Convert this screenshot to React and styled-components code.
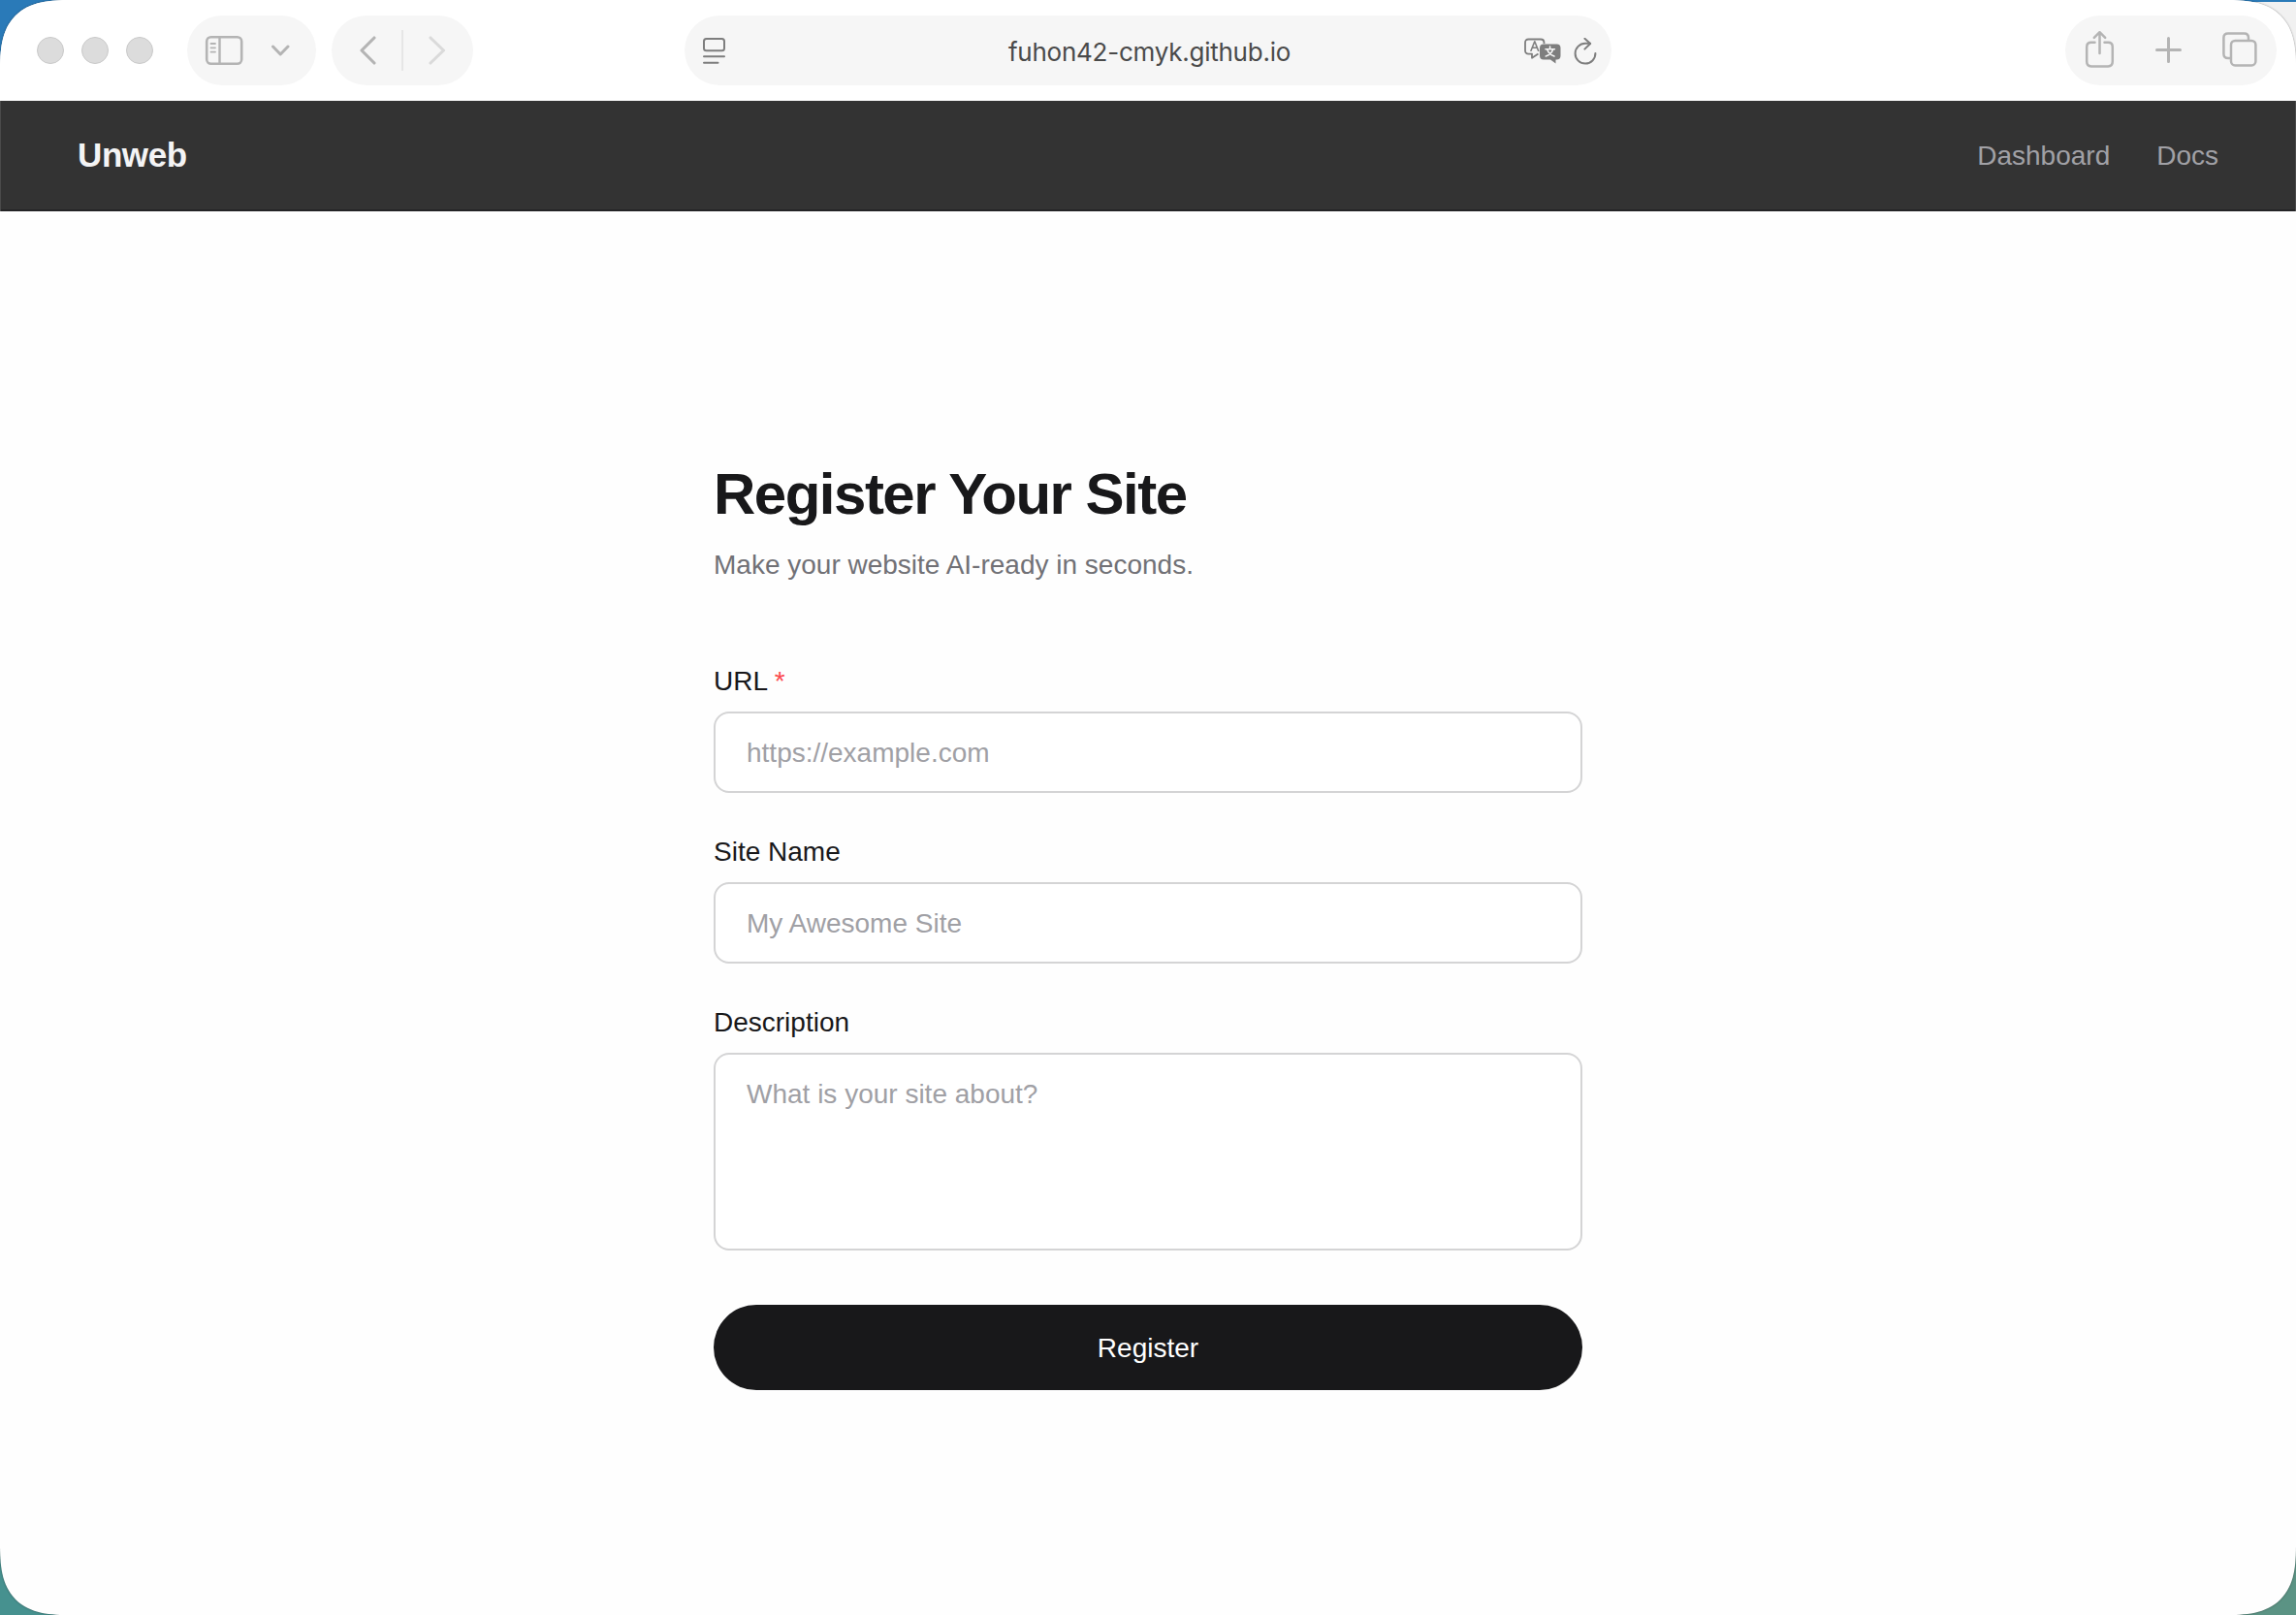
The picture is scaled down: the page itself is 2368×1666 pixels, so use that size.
import React from "react";
//Styles
import styled, { createGlobalStyle } from "styled-components";

const App = () => {
  return (
    <Desktop>
      <GlobalStyle />
      <BackWindow />
      <Window>
        <Toolbar>
          <Lights>
            <Light />
            <Light />
            <Light />
          </Lights>
          <SidebarPill>
            <SidebarIcon />
            <ChevronDown />
          </SidebarPill>
          <HistoryPill>
            <Arrow color="#b4b4b4" d="M17 2 L4 15 L17 28" />
            <Separator />
            <Arrow color="#dadada" d="M3 2 L16.5 15 L3 28" />
          </HistoryPill>
          <AddressBar>
            <ReaderIcon />
            <Address>fuhon42-cmyk.github.io</Address>
            <AddressActions>
              <TranslateIcon />
              <ReloadIcon />
            </AddressActions>
          </AddressBar>
          <ActionsPill>
            <ShareIcon />
            <PlusIcon />
            <TabsIcon />
          </ActionsPill>
        </Toolbar>
        <Nav>
          <Logo>Unweb</Logo>
          <Links>
            <a>Dashboard</a>
            <a>Docs</a>
          </Links>
        </Nav>
        <Main>
          <Title>Register Your Site</Title>
          <Subtitle>Make your website AI-ready in seconds.</Subtitle>
          <Form>
            <Field>
              <Label>
                URL <span>*</span>
              </Label>
              <Input placeholder="https://example.com" />
            </Field>
            <Field>
              <Label>Site Name</Label>
              <Input placeholder="My Awesome Site" />
            </Field>
            <Field>
              <Label>Description</Label>
              <TextArea placeholder="What is your site about?" />
            </Field>
            <Button type="button">Register</Button>
          </Form>
        </Main>
      </Window>
    </Desktop>
  );
};

//Icons
const SidebarIcon = () => (
  <svg width="40" height="32" fill="none" stroke="#b4b4b4">
    <rect x="2.2" y="2.2" width="36" height="27.6" rx="4.5" strokeWidth="2.6" />
    <path d="M15.5 2.5 V29.5" strokeWidth="2.4" />
    <path
      d="M6.5 9 H11 M6.5 13.3 H11 M6.5 17.6 H11"
      strokeWidth="1.8"
      strokeLinecap="round"
    />
  </svg>
);

const ChevronDown = () => (
  <svg width="20" height="14" fill="none" stroke="#b4b4b4">
    <path
      d="M2.5 3 L10.2 11 L18 3"
      strokeWidth="3"
      strokeLinecap="round"
      strokeLinejoin="round"
    />
  </svg>
);

const Arrow = ({ color, d }) => (
  <svg width="20" height="30" fill="none" stroke={color}>
    <path d={d} strokeWidth="3.1" strokeLinecap="round" strokeLinejoin="round" />
  </svg>
);

const ReaderIcon = () => (
  <svg width="24" height="28" fill="none" stroke="#7e7e7e" strokeWidth="2">
    <rect x="1" y="1" width="21" height="12.2" rx="2.5" />
    <path d="M1 19.2 H22 M1 25.8 H15.5" strokeLinecap="round" />
  </svg>
);

const TranslateIcon = () => (
  <svg width="40" height="28" fill="none" stroke="#7e7e7e">
    <path
      d="M15.5 16.5 L9 20.8 V16.6 H5.5 Q2 16.6 2 13 V5 Q2 1.5 5.5 1.5 H18 Q21.5 1.5 21.5 5 V6"
      strokeWidth="1.8"
      strokeLinejoin="round"
    />
    <path
      d="M8 13.2 L11.8 3.8 L15.6 13.2 M9.3 10.2 H14.3"
      strokeWidth="1.6"
      strokeLinecap="round"
      strokeLinejoin="round"
    />
    <path
      d="M21 6.4 H34.5 Q38.5 6.4 38.5 10.4 V18.5 Q38.5 22.5 34.5 22.5 H33.5 V26.6 L28 22.5 H21 Q17 22.5 17 18.5 V10.4 Q17 6.4 21 6.4 Z"
      fill="#7e7e7e"
      stroke="none"
    />
    <path
      d="M27.6 9 V11.5 M23 11.7 H32.4 M24.7 12 Q26.5 17 32 19 M30.7 12 Q29 17 23.3 19"
      stroke="#f6f6f6"
      strokeWidth="1.6"
      strokeLinecap="round"
    />
  </svg>
);

const ReloadIcon = () => (
  <svg width="24" height="28" fill="none" stroke="#7e7e7e" strokeWidth="2">
    <path d="M22.4 16 A10.4 10.4 0 1 1 12 5.8 H17" strokeLinecap="round" />
    <path
      d="M11.4 0.8 L17.2 6 L11.4 11.6"
      strokeLinecap="round"
      strokeLinejoin="round"
    />
  </svg>
);

const ShareIcon = () => (
  <svg width="32" height="40" fill="none" stroke="#b4b4b4" strokeWidth="2.5">
    <path
      d="M10.5 12.8 H6.8 Q2.2 12.8 2.2 17.4 V32.6 Q2.2 37.4 6.8 37.4 H24.2 Q28.8 37.4 28.8 32.6 V17.4 Q28.8 12.8 24.2 12.8 H20.5"
      strokeLinecap="round"
    />
    <path
      d="M15.5 24 V2.6 M9.8 7.8 L15.5 2.2 L21.2 7.8"
      strokeLinecap="round"
      strokeLinejoin="round"
    />
  </svg>
);

const PlusIcon = () => (
  <svg width="28" height="28" fill="none" stroke="#b4b4b4" strokeWidth="3">
    <path d="M1.5 14.4 H25.5 M13.5 2.4 V26.4" strokeLinecap="round" />
  </svg>
);

const TabsIcon = () => (
  <svg width="36" height="36" fill="none" stroke="#b4b4b4" strokeWidth="2.5">
    <path d="M8.5 27 H6 Q1.4 27 1.4 22.5 V6 Q1.4 1.4 6 1.4 H22.5 Q27 1.4 27 6 V8.5" />
    <rect x="9" y="9" width="25.4" height="25.4" rx="4.2" />
  </svg>
);

const GlobalStyle = createGlobalStyle`
  * {
    margin: 0;
    padding: 0;
    box-sizing: border-box;
  }
  body {
    overflow: hidden;
    font-family: "Liberation Sans", Arial, sans-serif;
  }
`;

const Desktop = styled.div`
  position: relative;
  height: 1666px;
  background: linear-gradient(#2a7ab8 0 50%, transparent 50%),
    linear-gradient(90deg, #46918f 50%, #5b9384 50%);
`;

//Another window peeking out behind the top right corner
const BackWindow = styled.div`
  position: absolute;
  top: 2px;
  right: 0;
  width: 300px;
  height: 800px;
  background: #f1f1f1;
`;

const Window = styled.div`
  position: relative;
  height: 100%;
  display: flex;
  flex-direction: column;
  border-radius: 54px;
  overflow: hidden;
  background: #fefefe;
  box-shadow: 0 0 2px rgba(0, 0, 0, 0.5);
  @supports (corner-shape: superellipse(1.5)) {
    border-radius: 74px;
    corner-shape: superellipse(1.5);
  }
`;

const Toolbar = styled.div`
  display: flex;
  align-items: center;
  height: 104px;
  padding: 0 20px 0 38px;
  background: white;
`;

const Lights = styled.div`
  display: flex;
  gap: 18px;
`;

const Light = styled.span`
  width: 28px;
  height: 28px;
  border: 1px solid #c9c9c9;
  border-radius: 50%;
  background: #dcdcdc;
`;

const Pill = styled.div`
  display: flex;
  align-items: center;
  height: 72px;
  border-radius: 36px;
  background: #f6f6f6;
`;

const SidebarPill = styled(Pill)`
  gap: 28px;
  width: 133px;
  margin-left: 35px;
  padding-left: 18px;
`;

const HistoryPill = styled(Pill)`
  gap: 25px;
  width: 146px;
  margin-left: 16px;
  padding-left: 27px;
`;

const Separator = styled.span`
  width: 2px;
  height: 42px;
  background: #e6e6e6;
`;

const AddressBar = styled(Pill)`
  justify-content: space-between;
  width: 956px;
  margin-left: 218px;
  padding: 2px 15px 0 19px;
`;

const Address = styled.span`
  padding-left: 51px;
  color: #4a4a4a;
  font-family: Inter, sans-serif;
  font-size: 26px;
  letter-spacing: -0.24px;
`;

const AddressActions = styled.div`
  display: flex;
  gap: 12px;
`;

const ActionsPill = styled(Pill)`
  justify-content: space-between;
  width: 218px;
  margin-left: auto;
  padding: 0 20px;
  padding-bottom: 2px;
`;

const Nav = styled.nav`
  display: flex;
  align-items: center;
  justify-content: space-between;
  height: 114px;
  padding: 0 79px;
  border: solid #4a4a4a;
  border-width: 0 1px;
  background: #333;
  box-shadow: inset 0 -2px #242426;
`;

const Logo = styled.div`
  padding-bottom: 2px;
  color: #f4f4f5;
  font-size: 35px;
  font-weight: bold;
  letter-spacing: -0.4px;
`;

const Links = styled.div`
  display: flex;
  gap: 48px;
  color: #a1a1a6;
  font-size: 28px;
`;

const Main = styled.main`
  width: 896px;
  margin: 0 auto;
  padding-top: 256px;
`;

const Title = styled.h1`
  color: #18181a;
  font-size: 60px;
  line-height: 72px;
  letter-spacing: -0.025em;
`;

const Subtitle = styled.p`
  margin-top: 15px;
  color: #717176;
  font-size: 28px;
  line-height: 44px;
`;

const Form = styled.form`
  display: flex;
  flex-direction: column;
  gap: 40px;
  margin-top: 78px;
`;

const Field = styled.div`
  display: flex;
  flex-direction: column;
  gap: 11px;
  & + & {
    margin-top: 1px;
  }
`;

const Label = styled.label`
  color: #18181a;
  font-size: 28px;
  line-height: 40px;
  span {
    color: #fb4a4e;
  }
`;

const Input = styled.input`
  height: 84px;
  padding: 2px 32px 0;
  border: 2px solid #d4d4d5;
  border-radius: 16px;
  outline: none;
  background: white;
  font: 28px "Liberation Sans", Arial, sans-serif;
  &::placeholder {
    color: #a0a0a5;
  }
`;

const TextArea = styled(Input).attrs({ as: "textarea" })`
  height: 204px;
  padding: 20px 32px;
  line-height: 42px;
  resize: none;
`;

const Button = styled.button`
  height: 88px;
  margin-top: 16px;
  padding-top: 2px;
  border: none;
  border-radius: 44px;
  background: #18181a;
  color: white;
  font: 28px "Liberation Sans", Arial, sans-serif;
`;

export default App;
